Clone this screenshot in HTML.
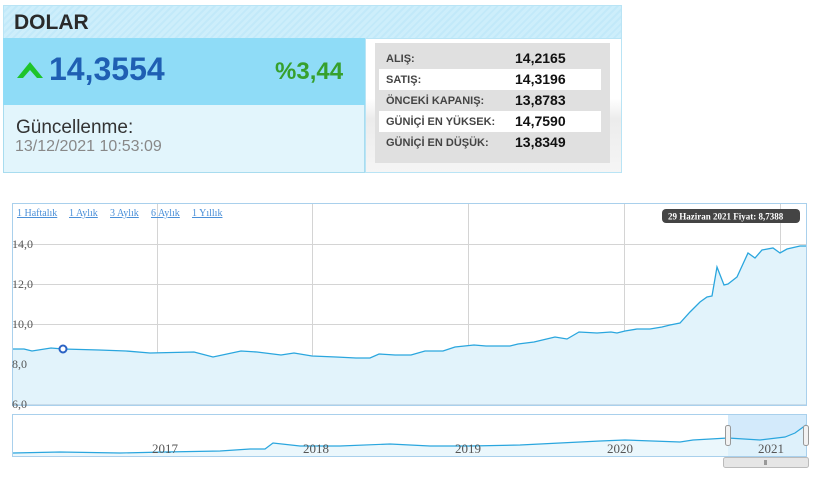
<!DOCTYPE html>
<html><head><meta charset="utf-8"><style>
*{margin:0;padding:0;box-sizing:border-box}
body{width:813px;height:485px;background:#fff;font-family:"Liberation Sans",sans-serif;position:relative;overflow:hidden}
.abs{position:absolute}
.hdr{left:3px;top:5px;width:619px;height:33px;background:repeating-linear-gradient(135deg,#cdeefb 0 3px,#c2e9f9 3px 5px);border:1px solid #b9e4f5;border-bottom:none}
.hdr span{position:absolute;left:10px;top:5px;font-weight:bold;font-size:21px;color:#2a2a2a}
.blue{left:3px;top:38px;width:362px;height:67px;background:#8fdcf7}
.pale{left:3px;top:105px;width:362px;height:68px;background:#e2f5fc;border:1px solid #a8dcef;border-top:none}
.right{left:365px;top:38px;width:257px;height:135px;background:linear-gradient(#fff 0,#fff 45%,#ececec 60%,#f5f5f5 100%);border:1px solid #b9e4f5}
.grey{left:375px;top:43px;width:235px;height:120px;background:#e0e0e0}
.row{position:absolute;left:379px;width:222px;height:21px;font-size:11px;font-weight:bold;color:#444}
.row b{position:absolute;left:7px;top:5px;font-size:11px}
.row i{position:absolute;left:136px;top:2px;font-style:normal;font-size:14px;color:#111}
.w{background:#fff}
</style></head><body>
<div class="abs hdr"><span>DOLAR</span></div>
<div class="abs blue">
<svg class="abs" style="left:13px;top:23px" width="28" height="18"><polygon points="14,1 27,17 21,17 14,9 7,17 1,17" fill="#1fc42b"/></svg>
<div class="abs" style="left:46px;top:13px;font-size:32px;font-weight:bold;color:#1f5fb3">14,3554</div>
<div class="abs" style="left:272px;top:20px;font-size:24px;font-weight:bold;color:#36a02d">%3,44</div>
</div>
<div class="abs pale">
<div class="abs" style="left:12px;top:12px;font-size:19px;color:#333">Güncellenme:</div>
<div class="abs" style="left:11px;top:33px;font-size:16px;color:#888">13/12/2021 10:53:09</div>
</div>
<div class="abs right"></div>
<div class="abs grey"></div>
<div class="row" style="top:48px"><b>ALIŞ:</b><i>14,2165</i></div>
<div class="row w" style="top:69px"><b>SATIŞ:</b><i>14,3196</i></div>
<div class="row" style="top:90px"><b>ÖNCEKİ KAPANIŞ:</b><i>13,8783</i></div>
<div class="row w" style="top:111px"><b>GÜNİÇİ EN YÜKSEK:</b><i>14,7590</i></div>
<div class="row" style="top:132px"><b>GÜNİÇİ EN DÜŞÜK:</b><i>13,8349</i></div>

<svg class="abs" style="left:0;top:0" width="813" height="485" font-family="Liberation Serif,serif">
<rect x="12.5" y="203.5" width="794" height="202" fill="#fff" stroke="#a9d0ec"/>
<g stroke="#d4d4d4" stroke-width="1">
<line x1="13" y1="244.5" x2="806" y2="244.5"/><line x1="13" y1="284.5" x2="806" y2="284.5"/><line x1="13" y1="324.5" x2="806" y2="324.5"/><line x1="13" y1="364.5" x2="806" y2="364.5"/>
<line x1="157.5" y1="204" x2="157.5" y2="405"/><line x1="312.5" y1="204" x2="312.5" y2="405"/><line x1="468.5" y1="204" x2="468.5" y2="405"/><line x1="624.5" y1="204" x2="624.5" y2="405"/><line x1="780.5" y1="204" x2="780.5" y2="405"/>
</g>
<path d="M13,349 L24,349 32,351 51,348 63,349 99,350 126,351 150,353 194,352 213,357 241,351 257,352 281,355 294,353 312,356 336,357 356,358 370,358 379,354 395,355 411,355 425,351 443,351 455,347 474,345 486,346 510,346 518,344 534,342 555,337 567,339 579,332 597,333 611,332 617,333 625,331 637,329 650,329 662,327 670,325 680,323 690,312 700,302 707,297 712,296 717,267 724,285 728,284 737,277 748,253 755,258 762,250 773,248 780,253 787,249 800,246 806,246 L806,405 L13,405Z" fill="#e2f3fb"/>
<path d="M13,349 L24,349 32,351 51,348 63,349 99,350 126,351 150,353 194,352 213,357 241,351 257,352 281,355 294,353 312,356 336,357 356,358 370,358 379,354 395,355 411,355 425,351 443,351 455,347 474,345 486,346 510,346 518,344 534,342 555,337 567,339 579,332 597,333 611,332 617,333 625,331 637,329 650,329 662,327 670,325 680,323 690,312 700,302 707,297 712,296 717,267 724,285 728,284 737,277 748,253 755,258 762,250 773,248 780,253 787,249 800,246 806,246" fill="none" stroke="#2aa6de" stroke-width="1.3"/>
<line x1="13" y1="404.5" x2="806" y2="404.5" stroke="#c9dcea"/>
<circle cx="63" cy="349" r="3.5" fill="#fff" stroke="#2a62c4" stroke-width="2"/>
<g font-size="12" fill="#555">
<text x="12" y="248">14,0</text><text x="12" y="288">12,0</text><text x="12" y="328">10,0</text><text x="12" y="368">8,0</text><text x="12" y="408">6,0</text>
</g>
<g font-size="10" fill="#4a8fd8" text-decoration="underline">
<text x="17" y="216">1 Haftalık</text><text x="69" y="216">1 Aylık</text><text x="110" y="216">3 Aylık</text><text x="151" y="216">6 Aylık</text><text x="192" y="216">1 Yıllık</text>
</g>
<rect x="662" y="209" width="138" height="14" rx="4" fill="#444"/>
<text x="668" y="219.5" font-size="9" fill="#fff" font-weight="bold">29 Haziran 2021 Fiyat: 8,7388</text>
<rect x="12.5" y="414.5" width="794" height="42" fill="#fff" stroke="#a9d0ec"/>
<rect x="728" y="415" width="78" height="41" fill="#d3eafb"/>
<path d="M13,453 L60,452 120,453 165,452 220,451 250,449 265,449 273,443 300,446 340,446 390,444 430,446 470,446 520,445 560,443 600,441 625,440 680,442 693,440 728,438 760,440 785,437 795,433 806,425 L806,456 L13,456Z" fill="#e2f3fb" fill-opacity="0.7"/>
<path d="M13,453 L60,452 120,453 165,452 220,451 250,449 265,449 273,443 300,446 340,446 390,444 430,446 470,446 520,445 560,443 600,441 625,440 680,442 693,440 728,438 760,440 785,437 795,433 806,425" fill="none" stroke="#2aa6de" stroke-width="1.2"/>
<g font-size="13" fill="#555" text-anchor="middle">
<text x="165" y="453">2017</text><text x="316" y="453">2018</text><text x="468" y="453">2019</text><text x="620" y="453">2020</text><text x="771" y="453">2021</text>
</g>
<rect x="725.5" y="425.5" width="5" height="20" rx="2" fill="#f2f2f2" stroke="#999"/>
<rect x="803.5" y="425.5" width="5" height="20" rx="2" fill="#f2f2f2" stroke="#999"/>
<rect x="723.5" y="457.5" width="85" height="10" rx="2" fill="#e6e6e6" stroke="#bbb"/>
<rect x="764" y="460" width="3" height="5" fill="#999"/>
</svg>
</body></html>
